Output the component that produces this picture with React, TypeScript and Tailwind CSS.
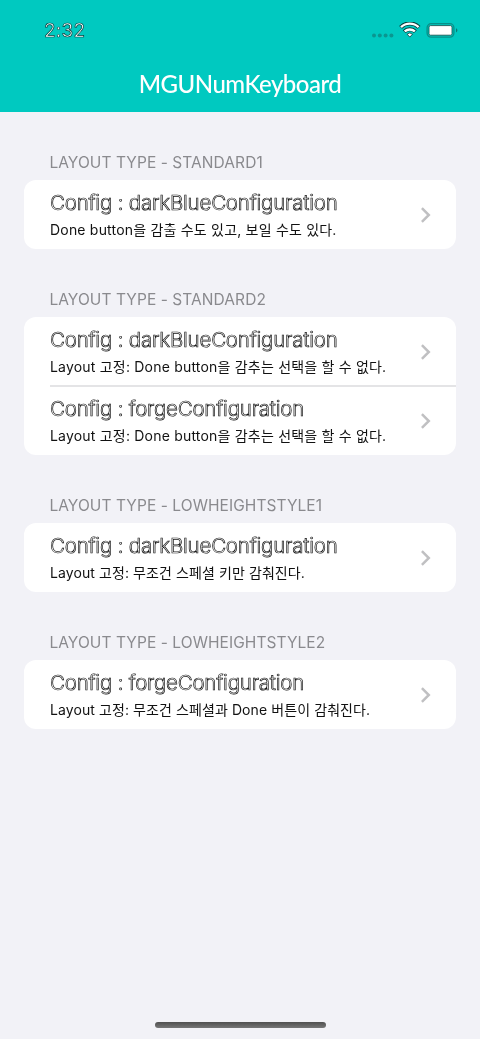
type Item = { title: string; detail: string; tracking: string };
type Section = { label: string; items: Item[] };

const DARK = 'Config : darkBlueConfiguration';
const FORGE = 'Config : forgeConfiguration';
const NORMAL = 'tracking-[0.2px]';
const TIGHT = 'tracking-[0.09px]';

const sections: Section[] = [
  {
    label: 'LAYOUT TYPE - STANDARD1',
    items: [{ title: DARK, detail: 'Done button을 감출 수도 있고, 보일 수도 있다.', tracking: NORMAL }],
  },
  {
    label: 'LAYOUT TYPE - STANDARD2',
    items: [
      { title: DARK, detail: 'Layout 고정: Done button을 감추는 선택을 할 수 없다.', tracking: NORMAL },
      { title: FORGE, detail: 'Layout 고정: Done button을 감추는 선택을 할 수 없다.', tracking: NORMAL },
    ],
  },
  {
    label: 'LAYOUT TYPE - LOWHEIGHTSTYLE1',
    items: [{ title: DARK, detail: 'Layout 고정: 무조건 스페셜 키만 감춰진다.', tracking: TIGHT }],
  },
  {
    label: 'LAYOUT TYPE - LOWHEIGHTSTYLE2',
    items: [{ title: FORGE, detail: 'Layout 고정: 무조건 스페셜과 Done 버튼이 감춰진다.', tracking: TIGHT }],
  },
];

function StatusIcons() {
  return (
    <svg width="88" height="18" viewBox="0 0 88 18" fill="none">
      <g fill="#0a9690">
        <circle cx="3" cy="13.5" r="2" />
        <circle cx="8.8" cy="13.5" r="2" />
        <circle cx="14.6" cy="13.5" r="2" />
        <circle cx="20.4" cy="13.5" r="2" />
      </g>
      <g stroke="#063b39" strokeWidth="4">
        <path d="M29.6 5.4a12.6 12.6 0 0 1 18.4 0" />
        <path d="M33.2 9.6a7.8 7.8 0 0 1 11.2 0" />
      </g>
      <g stroke="#fff" strokeWidth="2.4">
        <path d="M30 5.2a12.6 12.6 0 0 1 17.6 0" />
        <path d="M33.7 9.4a7.8 7.8 0 0 1 10.2 0" />
      </g>
      <path d="M36.1 12.2a4 4 0 0 1 5.4 0l-2.7 2.9z" fill="#fff" stroke="#063b39" strokeWidth="0.8" />
      <rect x="56.1" y="1.7" width="26.8" height="13.4" rx="4" stroke="#078f88" strokeWidth="1.3" />
      <rect x="58" y="3.6" width="23" height="9.6" rx="1.5" fill="#fff" stroke="#0b4542" strokeWidth="0.8" />
      <path d="M85 6.2c1.9.7 1.9 3.5 0 4.2z" fill="#087a75" />
    </svg>
  );
}

function Row({ item, divided }: { item: Item; divided: boolean }) {
  return (
    <div className="flex h-[69px] items-start pl-[25.5px]">
      <div
        className={`flex h-[70px] flex-1 items-center justify-between border-b-2 pr-[25px] ${divided ? 'border-[#e4e4e6]' : 'border-transparent'}`}
      >
        <div className="whitespace-nowrap pt-[3px] will-change-transform">
          <div className="text-[20.5px] font-light leading-[28px] tracking-[-0.21px] text-white [-webkit-text-stroke:0.7px_#111]">
            {item.title}
          </div>
          <div className={`text-[14px] leading-[26px] text-[#111] ${item.tracking}`}>{item.detail}</div>
        </div>
        <svg width="10" height="16" viewBox="0 0 10 16" fill="none" stroke="#c0c0c2" strokeWidth="2.5" className="mt-[2px]">
          <path d="M0.9 1.2L7.8 8l-6.9 6.8" />
        </svg>
      </div>
    </div>
  );
}

export default function App() {
  return (
    <div className="flex h-[1039px] w-[480px] flex-col overflow-hidden bg-[#f2f2f7] font-['Inter','Noto_Sans_CJK_KR',sans-serif] antialiased">
      <header className="flex h-[112px] shrink-0 flex-col bg-[#00c9c0]">
        <div className="flex h-[56px] items-start justify-between pl-[44px] pr-[21px] pt-[22px]">
          <span className="text-[19px] leading-[18px] tracking-[0.2px] text-white will-change-transform [-webkit-text-stroke:0.7px_#063b39]">
            2:32
          </span>
          <StatusIcons />
        </div>
        <h1 className="text-center font-['Lato',sans-serif] text-[24px] font-medium leading-[57px] tracking-[-0.5px] text-white will-change-transform">
          MGUNumKeyboard
        </h1>
      </header>
      <main className="flex flex-1 flex-col px-[24px]">
        {sections.map((section) => (
          <section key={section.label} className="flex flex-col">
            <h2 className="flex h-[68px] items-end pb-[7px] pl-[25.4px] text-[15.5px] leading-[20px] tracking-[0.07px] text-[#8a8a8e] will-change-transform">
              {section.label}
            </h2>
            <div className="rounded-[12px] bg-white">
              {section.items.map((item, index) => (
                <Row key={item.title} item={item} divided={index < section.items.length - 1} />
              ))}
            </div>
          </section>
        ))}
      </main>
      <footer className="flex h-[17px] shrink-0 justify-center">
        <div className="h-[6px] w-[171px] rounded-full bg-linear-to-b from-[#505050] to-[#777]" />
      </footer>
    </div>
  );
}
